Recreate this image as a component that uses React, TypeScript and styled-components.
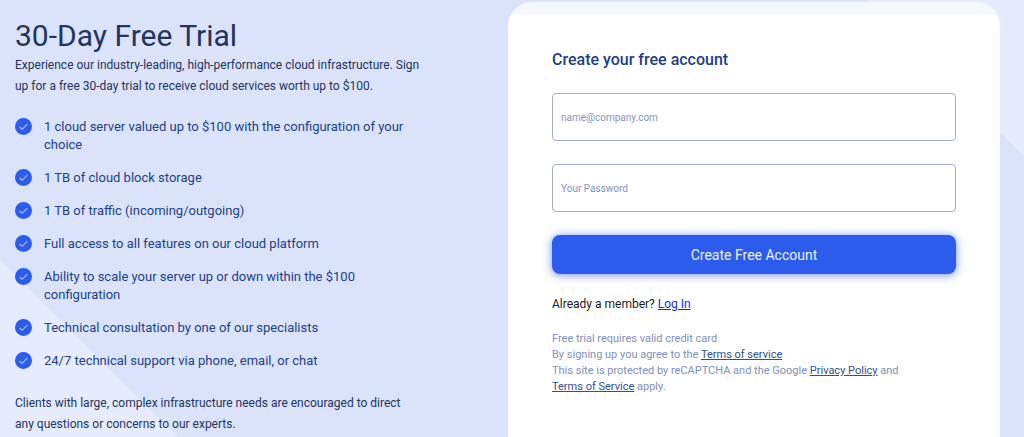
import React from "react";
import styled, { createGlobalStyle } from "styled-components";

const GlobalStyle = createGlobalStyle`
  *, *::before, *::after { box-sizing: border-box; }
  body {
    margin: 0;
    font-family: Roboto, "Liberation Sans", sans-serif;
    color: #22345f;
  }
`;

const Page = styled.main`
  display: grid;
  grid-template-columns: 127fr 123fr;
  min-height: 100vh;
  padding-right: 24px;
  overflow: hidden;
  background:
    linear-gradient(45deg, #e6ebfe 125px, transparent 126px),
    linear-gradient(225deg, #e6ebfe 110px, transparent 111px),
    #dbe3fb;
`;

const Intro = styled.section`
  padding: 17px 87px 0 15px;
`;

const Title = styled.h1`
  margin: 0;
  font-size: 30px;
  line-height: 38px;
  font-weight: 400;
`;

const Copy = styled.p`
  margin: 0;
  font-size: 12px;
  line-height: 21px;
`;

const Features = styled.ul`
  display: grid;
  gap: 15px;
  list-style: none;
  margin: 21px 0 23px;
  padding: 0;
`;

const Feature = styled.li`
  display: flex;
  align-items: flex-start;
  gap: 12px;
  color: #204189;
  font-size: 13px;
  line-height: 18px;
`;

const Tick = styled.svg`
  flex: none;
  width: 17px;
  height: 17px;
`;

const Card = styled.section`
  margin-top: 2px;
  padding: 47px 44px 24px;
  border-radius: 24px 24px 0 0;
  background: linear-gradient(#f5f9ff 13px, #fefefe 13px);
`;

const Heading = styled.h2`
  margin: 0 0 22px;
  font-size: 16px;
  line-height: 22px;
  font-weight: 500;
  color: #1f4085;
`;

const Form = styled.form`
  display: grid;
  gap: 23px;
`;

const Field = styled.input`
  width: 100%;
  height: 48px;
  padding: 0 8px;
  border: 1px solid #a5aecd;
  border-radius: 4px;
  background: #fefefe;
  color: #22345f;
  font-family: inherit;
  font-size: 10px;

  &::placeholder {
    color: #8494bf;
    opacity: 1;
  }
`;

const Submit = styled.button`
  height: 39px;
  border: 0;
  border-radius: 8px;
  background: #2b5ced;
  box-shadow: 0 1px 8px #2b5cedb0;
  color: #eef3ff;
  font-family: inherit;
  font-size: 14px;
  cursor: pointer;
`;

const Member = styled.p`
  margin: 20px 0 17px;
  font-size: 12px;
  line-height: 20px;
  color: #1b1b24;

  a { color: #2222ee; }
`;

const Legal = styled.p`
  max-width: 350px;
  margin: 0;
  font-size: 11px;
  line-height: 16px;
  color: #8090bb;

  a { color: #30508f; }
`;

const features = [
  "1 cloud server valued up to $100 with the configuration of your choice",
  "1 TB of cloud block storage",
  "1 TB of traffic (incoming/outgoing)",
  "Full access to all features on our cloud platform",
  "Ability to scale your server up or down within the $100 configuration",
  "Technical consultation by one of our specialists",
  "24/7 technical support via phone, email, or chat",
];

export default function App() {
  return (
    <>
      <GlobalStyle />
      <Page>
        <Intro>
          <Title>30-Day Free Trial</Title>
          <Copy>
            Experience our industry-leading, high-performance cloud infrastructure. Sign up for a
            free 30-day trial to receive cloud services worth up to $100.
          </Copy>
          <Features>
            {features.map((text) => (
              <Feature key={text}>
                <Tick viewBox="0 0 17 17" aria-hidden="true">
                  <circle cx="8.5" cy="8.5" r="8.5" fill="#2b5ced" />
                  <path d="M4.7 9 7.1 11.3 12.3 6.1" fill="none" stroke="#b9caff" strokeWidth="1.1" />
                </Tick>
                <span>{text}</span>
              </Feature>
            ))}
          </Features>
          <Copy>
            Clients with large, complex infrastructure needs are encouraged to direct any questions
            or concerns to our experts.
          </Copy>
        </Intro>
        <Card>
          <Heading>Create your free account</Heading>
          <Form onSubmit={(event) => event.preventDefault()}>
            <Field type="email" aria-label="Email" placeholder="name@company.com" />
            <Field type="password" aria-label="Password" placeholder="Your Password" />
            <Submit type="submit">Create Free Account</Submit>
          </Form>
          <Member>
            Already a member? <a href="#login">Log In</a>
          </Member>
          <Legal>
            Free trial requires valid credit card
            <br />
            By signing up you agree to the <a href="#terms">Terms of service</a>
            <br />
            This site is protected by reCAPTCHA and the Google{" "}
            <a href="#privacy">Privacy Policy</a> and{" "}
            <a href="#google-terms">Terms of Service</a> apply.
          </Legal>
        </Card>
      </Page>
    </>
  );
}
